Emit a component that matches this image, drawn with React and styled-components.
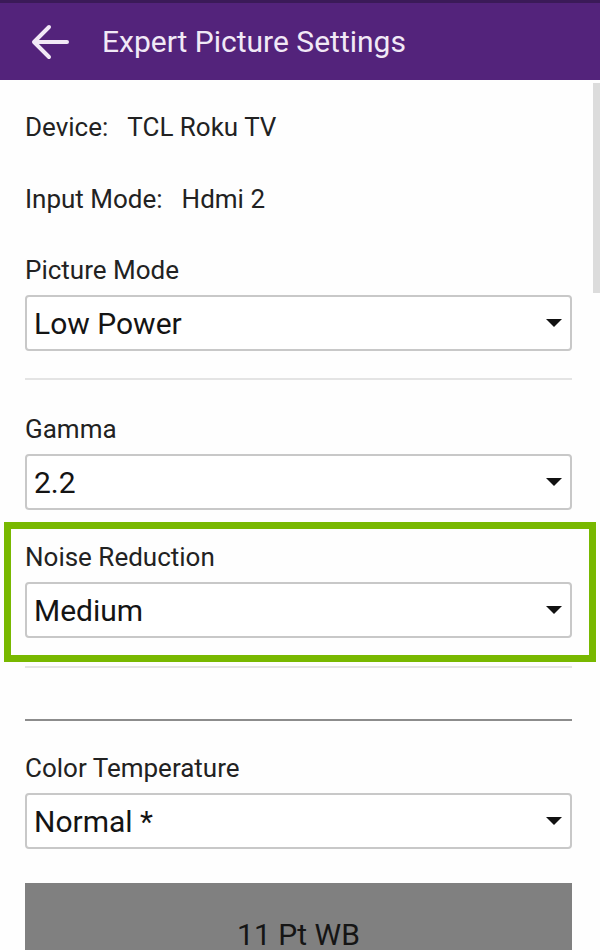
import React from "react";
import styled, { createGlobalStyle } from "styled-components";

const GlobalStyle = createGlobalStyle`
  html, body {
    margin: 0;
    padding: 0;
    background: #ffffff;
    font-family: Roboto, "Noto Sans", "Liberation Sans", sans-serif;
    overflow: hidden;
  }
`;

const Screen = styled.div`
  width: 600px;
  height: 950px;
  background: #fefefe;
  overflow: hidden;
  display: flex;
  flex-direction: column;
`;

const Toolbar = styled.div`
  height: 80px;
  flex-shrink: 0;
  background: #53237b;
  border-top: 3px solid #3b1a58;
  box-sizing: border-box;
  display: flex;
  align-items: center;
  padding-left: 31px;
  gap: 33px;
  color: #f1e9f6;
`;

const Title = styled.h1`
  margin: 0;
  font-size: 30px;
  font-weight: 400;
  line-height: 34px;
`;

const Body = styled.div`
  position: relative;
  flex: 1;
  padding: 0 28px 0 25px;
`;

const ScrollThumb = styled.div`
  position: absolute;
  top: 3px;
  right: 0;
  width: 7px;
  height: 210px;
  background: #dcdcdc;
`;

const InfoRow = styled.div`
  font-size: 26px;
  color: #222222;
  height: 72px;
  display: flex;
  align-items: center;
  &:nth-of-type(2) {
    margin-top: 11px;
  }
`;

const InfoValue = styled.span`
  margin-left: 19px;
`;

const Label = styled.div`
  font-size: 26px;
  color: #222222;
  line-height: 30px;
  margin-bottom: 10px;
`;

const Section = styled.div`
  padding-top: ${(p) => p.top || 0}px;
`;

const Highlight = styled.div`
  margin: 12px -24px 0 -21px;
  padding: 13px 17px 17px 14px;
  border: 7px solid #78b800;
`;

const SelectBox = styled.div`
  height: 56px;
  box-sizing: border-box;
  border: 2px solid #c8c8c8;
  border-radius: 4px;
  background: #ffffff;
  display: flex;
  align-items: center;
  justify-content: space-between;
  padding: 0 8px 0 7px;
  font-size: 30px;
  color: #141414;
`;

const Caret = styled.span`
  width: 0;
  height: 0;
  border-left: 8.5px solid transparent;
  border-right: 8.5px solid transparent;
  border-top: 8px solid #111111;
`;

const Divider = styled.div`
  height: 2px;
  background: ${(p) => (p.dark ? "#8c8c8c" : "#e4e4e4")};
  margin-top: ${(p) => p.top || 0}px;
`;

const GreyButton = styled.div`
  margin-top: 34px;
  height: 102px;
  background: #808080;
  display: flex;
  align-items: center;
  justify-content: center;
  font-size: 30px;
  color: #151515;
`;

const BackArrow = () => (
  <svg width="38" height="36" viewBox="0 0 38 36" fill="none">
    <path
      d="M36 18H4M18 3L3 18l15 15"
      stroke="#f1e9f6"
      strokeWidth="4"
      strokeLinecap="round"
      strokeLinejoin="round"
    />
  </svg>
);

const Select = ({ value }) => (
  <SelectBox>
    <span>{value}</span>
    <Caret />
  </SelectBox>
);

export default function App() {
  return (
    <Screen>
      <GlobalStyle />
      <Toolbar>
        <BackArrow />
        <Title>Expert Picture Settings</Title>
      </Toolbar>
      <Body>
        <ScrollThumb />
        <InfoRow>
          Device:<InfoValue>TCL Roku TV</InfoValue>
        </InfoRow>
        <InfoRow>
          Input Mode:<InfoValue>Hdmi 2</InfoValue>
        </InfoRow>
        <Section top={20}>
          <Label>Picture Mode</Label>
          <Select value="Low Power" />
        </Section>
        <Divider top={27} />
        <Section top={34}>
          <Label>Gamma</Label>
          <Select value="2.2" />
        </Section>
        <Highlight>
          <Label>Noise Reduction</Label>
          <Select value="Medium" />
        </Highlight>
        <Divider top={4} />
        <Divider dark top={51} />
        <Section top={32}>
          <Label>Color Temperature</Label>
          <Select value="Normal *" />
        </Section>
        <GreyButton>11 Pt WB</GreyButton>
      </Body>
    </Screen>
  );
}
